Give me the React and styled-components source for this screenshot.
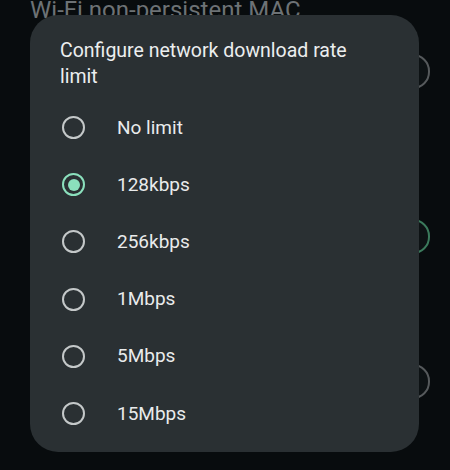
import React, { useState } from 'react';
import styled, { createGlobalStyle } from 'styled-components';

const GlobalStyle = createGlobalStyle`
  html, body {
    margin: 0;
    padding: 0;
    background: #080c0e;
  }
  body {
    font-family: Roboto, "Liberation Sans", sans-serif;
    -webkit-font-smoothing: antialiased;
  }
`;

const Screen = styled.div`
  position: relative;
  width: 450px;
  height: 470px;
  overflow: hidden;
  background: #080c0e;
`;

const SettingsList = styled.div`
  display: flex;
  flex-direction: column;
  padding: 0 20px 0 30px;
`;

const SectionTitle = styled.div`
  margin-top: -6px;
  font-size: 24px;
  line-height: 32px;
  color: #6d7275;
  white-space: nowrap;
`;

const SettingRow = styled.div`
  display: flex;
  align-items: center;
  justify-content: flex-end;
  height: 50px;
  margin-top: ${(p) => p.gap}px;
`;

const Switch = styled.div`
  width: 50px;
  height: 31px;
  border-radius: 17px;
  border: 2px solid ${(p) => (p.on ? '#3b7a5c' : '#55595b')};
  background: #0d1214;
`;

const Dialog = styled.div`
  position: absolute;
  left: 30px;
  top: 15px;
  width: 389px;
  height: 437px;
  box-sizing: border-box;
  border-radius: 28px;
  background: #2a3033;
  padding-top: 23px;
  display: flex;
  flex-direction: column;
  box-shadow: 0 0 0 100px rgba(0, 0, 0, 0);
`;

const Title = styled.h2`
  margin: 0 0 9px 0;
  padding: 0 30px;
  font-size: 19.5px;
  font-weight: 400;
  line-height: 26px;
  color: #eceeef;
`;

const Options = styled.div`
  display: flex;
  flex-direction: column;
`;

const Option = styled.label`
  display: flex;
  align-items: center;
  height: 57.2px;
  padding-left: 32px;
  gap: 32px;
  cursor: pointer;
`;

const Radio = styled.span`
  width: 19px;
  height: 19px;
  border-radius: 50%;
  border: 2px solid ${(p) => (p.checked ? '#8be0bd' : '#c4c8c9')};
  display: flex;
  align-items: center;
  justify-content: center;
  flex-shrink: 0;

  &::after {
    content: '';
    width: 12px;
    height: 12px;
    border-radius: 50%;
    background: #8be0bd;
    display: ${(p) => (p.checked ? 'block' : 'none')};
  }
`;

const Label = styled.span`
  font-size: 19px;
  line-height: 24px;
  color: #e9ebec;
`;

const rates = ['No limit', '128kbps', '256kbps', '1Mbps', '5Mbps', '15Mbps'];

export default function App() {
  const [selected, setSelected] = useState('128kbps');

  return (
    <Screen>
      <GlobalStyle />
      <SettingsList>
        <SectionTitle>Wi-Fi non-persistent MAC</SectionTitle>
        <SettingRow gap={20}>
          <Switch />
        </SettingRow>
        <SettingRow gap={115}>
          <Switch on />
        </SettingRow>
        <SettingRow gap={95}>
          <Switch />
        </SettingRow>
      </SettingsList>
      <Dialog role="dialog">
        <Title>Configure network download rate limit</Title>
        <Options>
          {rates.map((r) => (
            <Option key={r} onClick={() => setSelected(r)}>
              <Radio checked={selected === r} />
              <Label>{r}</Label>
            </Option>
          ))}
        </Options>
      </Dialog>
    </Screen>
  );
}
